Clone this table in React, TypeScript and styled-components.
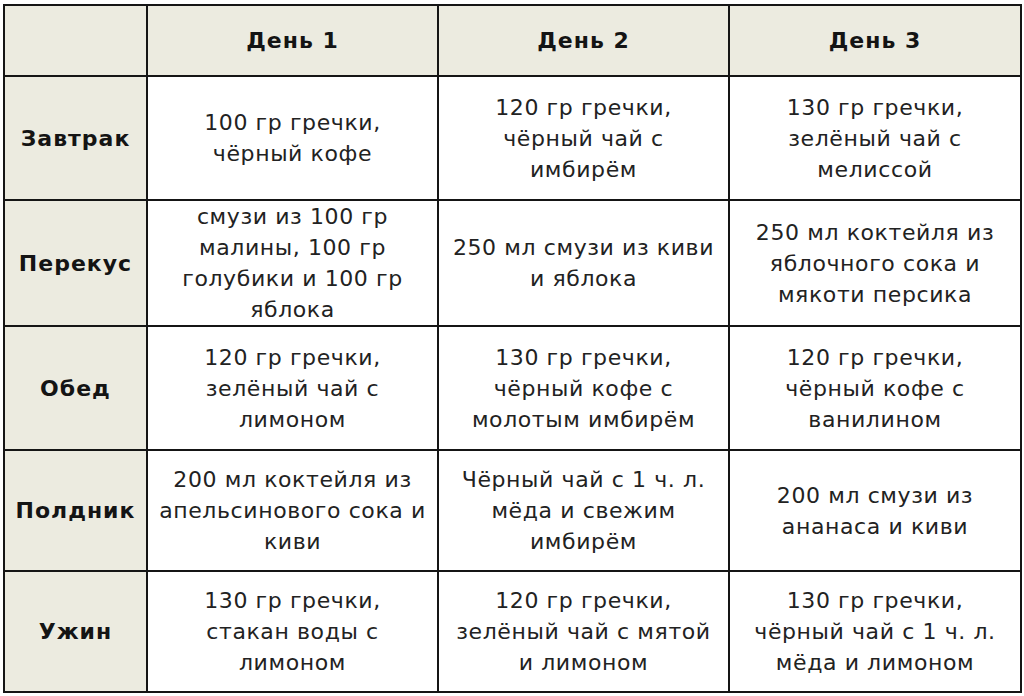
import React from "react";
import styled, { createGlobalStyle } from "styled-components";

const Global = createGlobalStyle`
  html, body { margin: 0; padding: 0; background: #ffffff; }
  body { font-family: "DejaVu Sans", Verdana, sans-serif; }
`;

const Page = styled.div`
  padding: 4px 0 0 3px;
`;

const Grid = styled.div`
  display: grid;
  width: 1019px;
  grid-template-columns: 141px 289px 289px 290px;
  grid-template-rows: 69px 122px 124px 122px 119px 119px;
  gap: 2px;
  padding: 2px;
  box-sizing: border-box;
  background: #151515;
`;

const Cell = styled.div<{ $shade?: boolean; $bold?: boolean }>`
  display: flex;
  align-items: center;
  justify-content: center;
  text-align: center;
  background: ${(p) => (p.$shade ? "#ecebe0" : "#ffffff")};
  color: ${(p) => (p.$bold ? "#141414" : "#222222")};
  font-size: 22px;
  font-weight: ${(p) => (p.$bold ? 700 : 400)};
  letter-spacing: ${(p) => (p.$bold ? "1px" : "0.6px")};
  line-height: 31px;
  padding: 0 2px;
  box-sizing: border-box;
  white-space: nowrap;
`;

const days = ["День 1", "День 2", "День 3"];

const rows: { label: string; cells: string[][] }[] = [
  {
    label: "Завтрак",
    cells: [
      ["100 гр гречки,", "чёрный кофе"],
      ["120 гр гречки,", "чёрный чай с", "имбирём"],
      ["130 гр гречки,", "зелёный чай с", "мелиссой"],
    ],
  },
  {
    label: "Перекус",
    cells: [
      ["смузи из 100 гр", "малины, 100 гр", "голубики и 100 гр", "яблока"],
      ["250 мл смузи из киви", "и яблока"],
      ["250 мл коктейля из", "яблочного сока и", "мякоти персика"],
    ],
  },
  {
    label: "Обед",
    cells: [
      ["120 гр гречки,", "зелёный чай с", "лимоном"],
      ["130 гр гречки,", "чёрный кофе с", "молотым имбирём"],
      ["120 гр гречки,", "чёрный кофе с", "ванилином"],
    ],
  },
  {
    label: "Полдник",
    cells: [
      ["200 мл коктейля из", "апельсинового сока и", "киви"],
      ["Чёрный чай с 1 ч. л.", "мёда и свежим", "имбирём"],
      ["200 мл смузи из", "ананаса и киви"],
    ],
  },
  {
    label: "Ужин",
    cells: [
      ["130 гр гречки,", "стакан воды с", "лимоном"],
      ["120 гр гречки,", "зелёный чай с мятой", "и лимоном"],
      ["130 гр гречки,", "чёрный чай с 1 ч. л.", "мёда и лимоном"],
    ],
  },
];

const Lines = ({ lines }: { lines: string[] }) => (
  <div>
    {lines.map((l, i) => (
      <React.Fragment key={i}>
        {l}
        {i < lines.length - 1 && <br />}
      </React.Fragment>
    ))}
  </div>
);

export default function App() {
  return (
    <>
      <Global />
      <Page>
        <Grid>
          <Cell $shade />
          {days.map((d) => (
            <Cell key={d} $shade $bold>
              {d}
            </Cell>
          ))}
          {rows.map((r) => (
            <React.Fragment key={r.label}>
              <Cell $shade $bold>
                {r.label}
              </Cell>
              {r.cells.map((c, i) => (
                <Cell key={i}>
                  <Lines lines={c} />
                </Cell>
              ))}
            </React.Fragment>
          ))}
        </Grid>
      </Page>
    </>
  );
}
